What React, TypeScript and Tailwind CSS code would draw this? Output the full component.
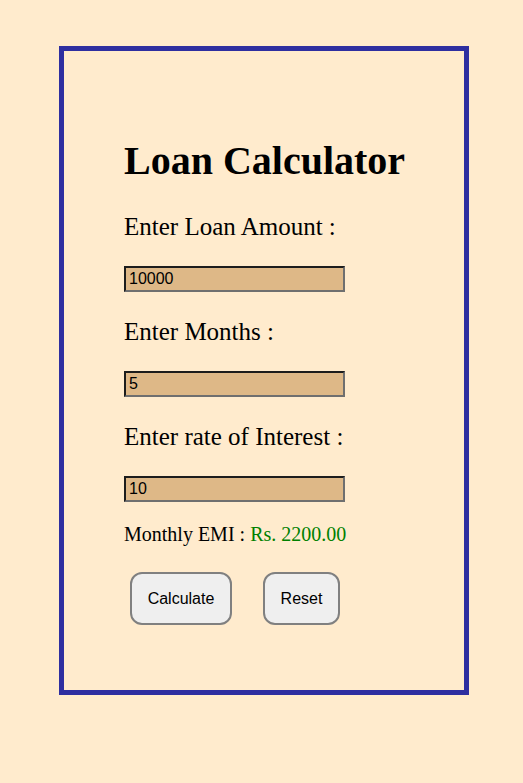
import { useState } from "react";

const serif = { fontFamily: '"Liberation Serif", "Times New Roman", serif' };

function Field({ label, value, onChange }: { label: string; value: string; onChange: (v: string) => void }) {
  return (
    <div>
      <p className="text-[25px] leading-[29px] text-black" style={serif}>
        {label}
      </p>
      <input
        value={value}
        onChange={(e) => onChange(e.target.value)}
        className="mt-[25px] mb-[25px] block h-[26px] w-[221px] border-2 border-t-[#1c1c1c] border-l-[#1c1c1c] border-b-[#6f6f6f] border-r-[#6f6f6f] bg-[#deb887] px-[3px] text-[16px] text-black outline-none font-['Liberation_Sans',Arial,sans-serif]"
      />
    </div>
  );
}

export default function App() {
  const [amount, setAmount] = useState("10000");
  const [months, setMonths] = useState("5");
  const [rate, setRate] = useState("10");
  const [emi, setEmi] = useState("2200.00");

  const calculate = () => {
    const p = parseFloat(amount) || 0;
    const m = parseFloat(months) || 0;
    const r = parseFloat(rate) || 0;
    if (!m) return setEmi("0.00");
    setEmi(((p + (p * r) / 100) / m).toFixed(2));
  };

  const reset = () => {
    setAmount("");
    setMonths("");
    setRate("");
    setEmi("0.00");
  };

  return (
    <div className="min-h-[783px] bg-[#ffebcd] pt-[46px] pl-[59px]">
      <div className="w-[410px] h-[649px] border-[5px] border-[#2e2ea0] px-[60px] pt-[87px]">
        <h1 className="whitespace-nowrap text-[40px] leading-[46px] font-bold text-black mb-[28px]" style={serif}>
          Loan Calculator
        </h1>
        <Field label="Enter Loan Amount :" value={amount} onChange={setAmount} />
        <Field label="Enter Months :" value={months} onChange={setMonths} />
        <Field label="Enter rate of Interest :" value={rate} onChange={setRate} />
        <p className="-mt-[4px] text-[20px] leading-[23px] text-black" style={serif}>
          Monthly EMI : <span className="text-[#008000]">Rs. {emi}</span>
        </p>
        <div className="mt-[26px] flex gap-[31px] pl-[6px] font-['Liberation_Sans',Arial,sans-serif] text-[16px] text-black">
          <button
            onClick={calculate}
            className="h-[53px] w-[102px] rounded-[12px] border-2 border-[#808080] bg-[#efefef]"
          >
            Calculate
          </button>
          <button
            onClick={reset}
            className="h-[53px] w-[77px] rounded-[12px] border-2 border-[#808080] bg-[#efefef]"
          >
            Reset
          </button>
        </div>
      </div>
    </div>
  );
}
